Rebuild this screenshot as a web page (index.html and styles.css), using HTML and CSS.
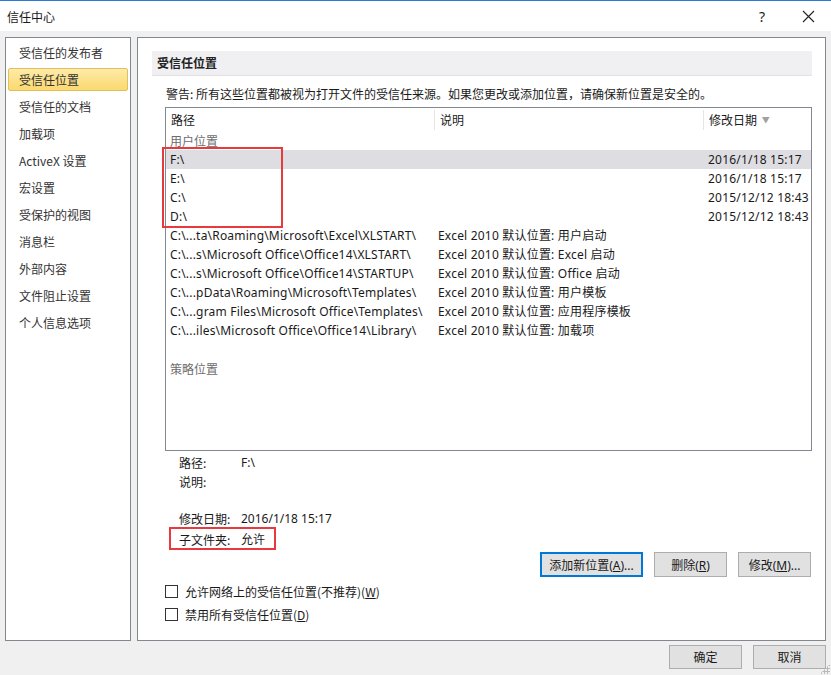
FILE: index.html
```html
<html>
  <head>
    <meta charset="UTF-8" />
    <title>信任中心</title>
    <link rel="stylesheet" href="styles.css">
  </head>
  <body>
    <div class="titlebar">
      <span class="title">信任中心</span>
      <span class="help">?</span>
      <span class="close">
        <svg width="13" height="13" viewBox="0 0 13 13"><path d="M1 1 L12 12 M12 1 L1 12" stroke="#222" stroke-width="1.1" fill="none" /></svg>
      </span>
    </div>

    <div class="main">
      <!-- 左側ナビ -->
      <ul class="nav">
        <li>受信任的发布者</li>
        <li class="active">受信任位置</li>
        <li>受信任的文档</li>
        <li>加载项</li>
        <li>ActiveX 设置</li>
        <li>宏设置</li>
        <li>受保护的视图</li>
        <li>消息栏</li>
        <li>外部内容</li>
        <li>文件阻止设置</li>
        <li>个人信息选项</li>
      </ul>

      <div class="panel">
        <div class="section-head">受信任位置</div>
        <div class="content">
          <p class="warning">警告: 所有这些位置都被视为打开文件的受信任来源。如果您更改或添加位置，请确保新位置是安全的。</p>

          <div class="list">
            <div class="list-head">
              <div class="col c-path">路径</div>
              <div class="col c-desc">说明</div>
              <div class="col c-date">修改日期 <span class="sort">&#9660;</span></div>
            </div>
            <div class="group">用户位置</div>
            <div class="row selected"><span class="c-path">F:\</span><span class="c-desc"></span><span class="c-date">2016/1/18 15:17</span></div>
            <div class="row"><span class="c-path">E:\</span><span class="c-desc"></span><span class="c-date">2016/1/18 15:17</span></div>
            <div class="row"><span class="c-path">C:\</span><span class="c-desc"></span><span class="c-date">2015/12/12 18:43</span></div>
            <div class="row"><span class="c-path">D:\</span><span class="c-desc"></span><span class="c-date">2015/12/12 18:43</span></div>
            <div class="row"><span class="c-path">C:\...ta\Roaming\Microsoft\Excel\XLSTART\</span><span class="c-desc">Excel 2010 默认位置: 用户启动</span><span class="c-date"></span></div>
            <div class="row"><span class="c-path">C:\...s\Microsoft Office\Office14\XLSTART\</span><span class="c-desc">Excel 2010 默认位置: Excel 启动</span><span class="c-date"></span></div>
            <div class="row"><span class="c-path">C:\...s\Microsoft Office\Office14\STARTUP\</span><span class="c-desc">Excel 2010 默认位置: Office 启动</span><span class="c-date"></span></div>
            <div class="row"><span class="c-path">C:\...pData\Roaming\Microsoft\Templates\</span><span class="c-desc">Excel 2010 默认位置: 用户模板</span><span class="c-date"></span></div>
            <div class="row"><span class="c-path">C:\...gram Files\Microsoft Office\Templates\</span><span class="c-desc">Excel 2010 默认位置: 应用程序模板</span><span class="c-date"></span></div>
            <div class="row"><span class="c-path">C:\...iles\Microsoft Office\Office14\Library\</span><span class="c-desc">Excel 2010 默认位置: 加载项</span><span class="c-date"></span></div>
            <div class="group policy">策略位置</div>
            <div class="mark mark-drives"></div>
          </div>

          <div class="details">
            <div class="d-row"><span class="d-label">路径:</span><span>F:\</span></div>
            <div class="d-row"><span class="d-label">说明:</span><span></span></div>
            <div class="d-row d-date"><span class="d-label">修改日期:</span><span>2016/1/18 15:17</span></div>
            <div class="d-row d-sub"><span class="d-label">子文件夹:</span><span>允许</span><div class="mark mark-sub"></div></div>
          </div>

          <div class="actions">
            <button class="btn default">添加新位置(<u>A</u>)...</button>
            <button class="btn">删除(<u>R</u>)</button>
            <button class="btn">修改(<u>M</u>)...</button>
          </div>

          <label class="check first"><span class="box"></span>允许网络上的受信任位置(不推荐)(<u>W</u>)</label>
          <label class="check"><span class="box"></span>禁用所有受信任位置(<u>D</u>)</label>
        </div>
      </div>
    </div>

    <div class="footer">
      <button class="btn">确定</button>
      <button class="btn">取消</button>
      <div class="grip"></div>
    </div>
  </body>
</html>
```

FILE: styles.css
```css
/* ダイアログ全体 */
html,
body {
  margin: 0;
  padding: 0;
}
body {
  width: 831px;
  height: 675px;
  overflow: hidden;
  background: #f0f0f0;
  font-family: "Noto Sans", "Noto Sans CJK SC", sans-serif;
  font-size: 12px;
  color: #1a1a1a;
  position: relative;
}

/** タイトルバー */
.titlebar {
  height: 30px;
  background: white;
  border-top: 1px solid #2b7bd4;
  display: flex;
  align-items: center;
  padding-left: 7px;
}
.titlebar .title {
  flex: 1;
  font-family: "Noto Sans CJK SC", sans-serif;
  font-size: 12px;
}
.titlebar .help {
  width: 46px;
  text-align: center;
  font-size: 14px;
  color: #222;
}
.titlebar .close {
  width: 46px;
  display: flex;
  justify-content: center;
  padding-top: 1px;
}

/** メイン */
.main {
  display: flex;
  gap: 6px;
  padding: 6px 0 0 5px;
  height: 604px;
}

/** 左ナビ */
.nav {
  list-style: none;
  margin: 0;
  padding: 3px 2px;
  width: 120px;
  background: white;
  border: 1px solid #828790;
}
.nav li {
  box-sizing: border-box;
  height: 23px;
  line-height: 21px;
  margin-bottom: 4px;
  padding-left: 10px;
  border: 1px solid transparent;
  border-radius: 2px;
  color: #333;
  font-family: "Noto Sans CJK SC", sans-serif;
}
.nav li.active {
  background: linear-gradient(to bottom, #fdeba9, #fbd96f);
  border-color: #e2bf5e;
}

/** 右パネル */
.panel {
  width: 689px;
  background: white;
  border: 1px solid #828790;
  padding: 13px 13px 0 14px;
  box-sizing: border-box;
}
.section-head {
  height: 25px;
  line-height: 24px;
  background: #f0f0f3;
  border-bottom: 1px solid #e2e2e6;
  box-sizing: border-box;
  padding-left: 5px;
  font-family: "Noto Sans CJK SC", sans-serif;
  font-weight: bold;
  color: #222;
}
.content {
  padding-left: 13px;
}
.warning {
  margin: 9px 0 5px 1px;
  line-height: 17px;
  font-family: "Noto Sans CJK SC", sans-serif;
}

/** リスト */
.list {
  position: relative;
  height: 342px;
  border: 1px solid #828790;
}
.list-head {
  display: flex;
  height: 23px;
  align-items: center;
}
.list-head .col {
  height: 20px;
  line-height: 20px;
  padding-left: 5px;
  box-sizing: border-box;
  border-right: 1px solid #e5e5e5;
  font-family: "Noto Sans CJK SC", sans-serif;
}
.list-head .c-date {
  border-right: 0;
}
.c-path {
  width: 269px;
  flex: none;
}
.c-desc {
  width: 269px;
  flex: none;
}
.c-date {
  flex: 1;
}
.sort {
  color: #a0a0a0;
  font-size: 8px;
  vertical-align: 2px;
  margin-left: 2px;
}
.group {
  height: 19px;
  line-height: 19px;
  padding-left: 4px;
  color: #6d6d6d;
  font-family: "Noto Sans CJK SC", sans-serif;
}
.group.policy {
  margin-top: 19px;
}
.row {
  display: flex;
  height: 19px;
  line-height: 19px;
  padding-left: 4px;
  white-space: nowrap;
  letter-spacing: 0.2px;
}
.row span {
  overflow: hidden;
}
.row .c-path {
  width: 268px;
}
.row .c-desc {
  width: 270px;
}
.row.selected {
  background: #dedee2;
}

/* 赤枠の注釈 */
.mark {
  position: absolute;
  border: 2px solid #e8393c;
}
.mark-drives {
  left: -4px;
  top: 39px;
  width: 117px;
  height: 77px;
}

/** 詳細 */
.details {
  padding: 2px 0 0 14px;
}
.d-row {
  position: relative;
  display: flex;
  height: 19px;
  line-height: 19px;
}
.d-label {
  width: 62px;
  font-family: "Noto Sans CJK SC", sans-serif;
}
.d-date {
  margin-top: 18px;
}
.d-sub {
  margin-top: 2px;
}
.mark-sub {
  left: -10px;
  top: -3px;
  width: 103px;
  height: 19px;
}

/** ボタン */
.btn {
  height: 25px;
  width: 73px;
  padding: 0;
  background: #e1e1e1;
  border: 1px solid #adadad;
  font-family: "Noto Sans", "Noto Sans CJK SC", sans-serif;
  font-size: 12px;
  color: #1a1a1a;
}
.btn.default {
  width: 103px;
  border: 2px solid #0078d7;
}
.actions {
  display: flex;
  justify-content: flex-end;
  gap: 11px;
  margin: 3px 1px 0 0;
}

/** チェックボックス */
.check {
  display: flex;
  align-items: center;
  height: 19px;
  margin-top: 4px;
  font-family: "Noto Sans CJK SC", sans-serif;
}
.check.first {
  margin-top: 5px;
}
.check .box {
  width: 11px;
  height: 11px;
  border: 1px solid #333;
  margin-right: 7px;
  background: white;
}

/** フッター */
.footer {
  display: flex;
  justify-content: flex-end;
  gap: 11px;
  padding: 4px 5px 0 0;
}
.footer .btn {
  height: 24px;
}
.grip {
  position: absolute;
  right: 1px;
  bottom: 1px;
  width: 10px;
  height: 10px;
  background: radial-gradient(circle, #b8b8b8 1px, transparent 1.2px) 0 0 / 3px 3px;
  clip-path: polygon(100% 0, 100% 100%, 0 100%);
}
```
